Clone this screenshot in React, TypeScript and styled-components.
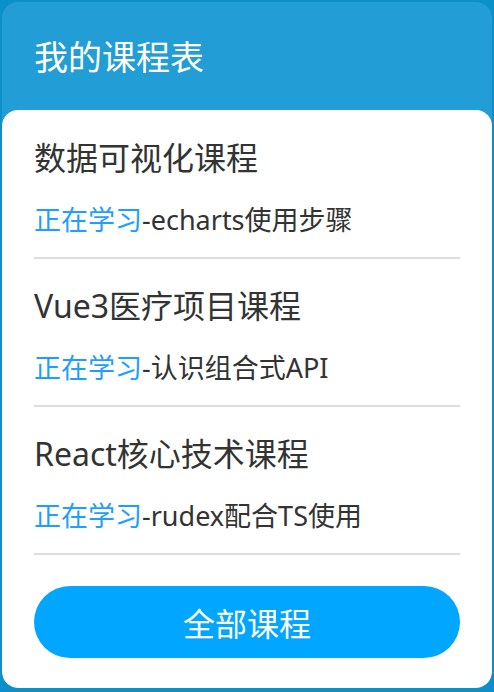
import React from "react";
import styled, { createGlobalStyle } from "styled-components";

const Global = createGlobalStyle`
  html, body {
    margin: 0;
    padding: 0;
    background: #0b91c8;
  }
  body {
    font-family: "Noto Sans", "Noto Sans CJK SC", sans-serif;
  }
  * { box-sizing: border-box; }
`;

const Page = styled.div`
  padding: 2px 2px 3px 2px;
  width: 494px;
`;

const Card = styled.div`
  width: 490px;
  background: #229dd6;
  border-radius: 16px;
  overflow: hidden;
  display: flex;
  flex-direction: column;
`;

const Header = styled.h1`
  margin: 0;
  height: 108px;
  display: flex;
  align-items: center;
  padding: 0 32px 2px;
  color: #ffffff;
  font-size: 34px;
  font-weight: 400;
`;

const Body = styled.div`
  background: #ffffff;
  border-radius: 16px;
  padding: 1px 32px 30px;
  display: flex;
  flex-direction: column;
`;

const Item = styled.div`
  padding: 27px 0 17px;
  border-bottom: 2px solid #dddddd;
  display: flex;
  flex-direction: column;
`;

const Title = styled.div`
  font-size: 32px;
  line-height: 40px;
  color: #333333;
  margin-bottom: 22px;
`;

const Sub = styled.div`
  font-size: 27px;
  line-height: 40px;
  color: #333333;
`;

const Status = styled.span`
  color: #1e9fff;
`;

const Button = styled.button`
  margin-top: 31px;
  height: 72px;
  border: none;
  border-radius: 36px;
  background: #00a6ff;
  color: #ffffff;
  font-family: inherit;
  font-size: 32px;
  padding: 0;
  display: flex;
  align-items: center;
  justify-content: center;
`;

const courses = [
  { title: "数据可视化课程", lesson: "echarts使用步骤" },
  { title: "Vue3医疗项目课程", lesson: "认识组合式API" },
  { title: "React核心技术课程", lesson: "rudex配合TS使用" },
];

export default function App() {
  return (
    <>
      <Global />
      <Page>
        <Card>
          <Header>我的课程表</Header>
          <Body>
            {courses.map((c) => (
              <Item key={c.title}>
                <Title>{c.title}</Title>
                <Sub>
                  <Status>正在学习</Status>-{c.lesson}
                </Sub>
              </Item>
            ))}
            <Button>全部课程</Button>
          </Body>
        </Card>
      </Page>
    </>
  );
}
